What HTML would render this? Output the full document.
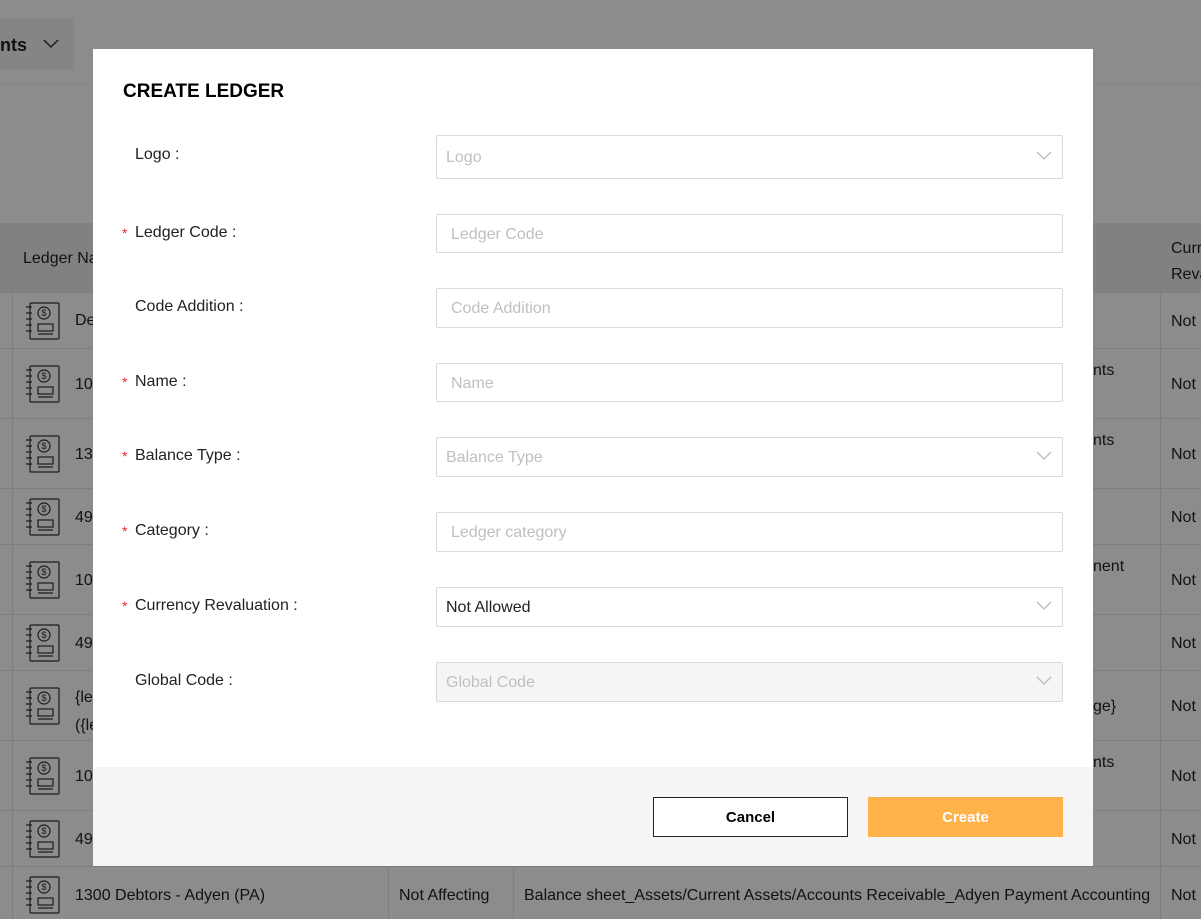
<!DOCTYPE html><html><head><style>
body{margin:0;width:1201px;height:919px;overflow:hidden;font-family:"Liberation Sans",sans-serif;background:#fff;position:relative}
.bg{position:absolute;inset:0;background:#fff}
.ov{position:absolute;inset:0;background:rgba(0,0,0,.45)}
.t{position:absolute;font-size:16px;color:#222}
.row{position:absolute;left:0;width:1201px;border-bottom:1px solid #e6e6e6}
.vl{position:absolute;top:223px;bottom:0;width:1px;background:#e6e6e6}
.modal{position:absolute;left:93px;top:49px;width:1000px;height:817px;background:#fff}
.lab{position:absolute;left:42px;font-size:16px;color:#222;margin-top:1px}
.req{position:absolute;left:29px;color:#f5222d;font-size:14px}
.inp{position:absolute;left:343px;width:627px;height:38px;border:1px solid #d9d9d9;border-radius:2px;box-sizing:border-box;font-size:16px;color:#bfbfbf;padding:0 14px;line-height:40px}
.sel{padding-left:9px}
.chev{position:absolute;right:10px;top:13px}
</style></head><body>
<div class="bg">
<div style="position:absolute;left:0;top:18px;width:74px;height:52px;background:#f2f2f2"></div>
<div class="t" style="left:0;top:35px;font-weight:bold;font-size:18px">nts</div>
<svg style="position:absolute;left:42px;top:38px" width="18" height="12"><path d="M2 2l7 7 7-7" stroke="#333" stroke-width="1.5" fill="none"/></svg>
<div style="position:absolute;left:0;top:84px;width:1201px;height:1px;background:#eee"></div>
<div style="position:absolute;left:0;top:223px;width:1201px;height:70px;background:#ececec"></div>
<div class="t" style="left:23px;top:250px">Ledger Na</div>
<div class="t" style="left:1171px;top:236px;line-height:26px">Curr<br>Reva</div>
<div class="vl" style="left:12px"></div><div class="vl" style="left:388px;top:867px"></div><div class="vl" style="left:513px;top:867px"></div><div class="vl" style="left:1160px"></div>
<div class="row" style="top:292px;height:56px"></div><div class="row" style="top:348px;height:70px"></div><div class="row" style="top:418px;height:70px"></div><div class="row" style="top:488px;height:56px"></div><div class="row" style="top:544px;height:70px"></div><div class="row" style="top:614px;height:56px"></div><div class="row" style="top:670px;height:70px"></div><div class="row" style="top:740px;height:70px"></div><div class="row" style="top:810px;height:56px"></div>
<div class="t" style="left:75px;top:312px">De</div><div class="t" style="left:75px;top:376px">10</div><div class="t" style="left:75px;top:446px">13</div><div class="t" style="left:75px;top:509px">49</div><div class="t" style="left:75px;top:572px">10</div><div class="t" style="left:75px;top:635px">49</div><div class="t" style="left:75px;top:684px;line-height:28px">{le<br>({le</div><div class="t" style="left:75px;top:768px">10</div><div class="t" style="left:75px;top:831px">49</div>
<div class="t" style="left:75px;top:887px">1300 Debtors - Adyen (PA)</div>
<div class="t" style="left:399px;top:887px">Not Affecting</div>
<div class="t" style="left:524px;top:887px">Balance sheet_Assets/Current Assets/Accounts Receivable_Adyen Payment Accounting</div>
<div class="t" style="left:1093px;top:362px">nts</div><div class="t" style="left:1093px;top:432px">nts</div><div class="t" style="left:1093px;top:558px">nent</div><div class="t" style="left:1093px;top:698px">ge}</div><div class="t" style="left:1093px;top:754px">nts</div>
<div class="t" style="left:1171px;top:313px">Not</div><div class="t" style="left:1171px;top:376px">Not</div><div class="t" style="left:1171px;top:446px">Not</div><div class="t" style="left:1171px;top:509px">Not</div><div class="t" style="left:1171px;top:572px">Not</div><div class="t" style="left:1171px;top:635px">Not</div><div class="t" style="left:1171px;top:698px">Not</div><div class="t" style="left:1171px;top:768px">Not</div><div class="t" style="left:1171px;top:831px">Not</div><div class="t" style="left:1171px;top:887px">Not</div>
<svg width="40" height="919" style="position:absolute;left:26px;top:0">
<defs><g id="ic" fill="none" stroke="#333" stroke-width="1.2"><rect x="4" y="1" width="29" height="36" rx="1"/><circle cx="18" cy="11" r="6"/><rect x="12" y="22" width="15" height="7"/><path d="M12 32h15M0 5h6M0 11h6M0 17h6M0 23h6M0 29h6"/><text x="15.5" y="14" font-size="9" fill="#333" stroke="none" font-family="Liberation Sans">$</text></g></defs>
<use href="#ic" y="302"/><use href="#ic" y="365"/><use href="#ic" y="435"/><use href="#ic" y="498"/><use href="#ic" y="561"/><use href="#ic" y="624"/><use href="#ic" y="687"/><use href="#ic" y="757"/><use href="#ic" y="820"/><use href="#ic" y="876"/>
</svg>
</div>
<div class="ov"></div>
<div class="modal">
<div style="position:absolute;left:30px;top:32px;font-size:19px;font-weight:bold;color:#000">CREATE LEDGER</div>
<div class="lab" style="top:96px">Logo :</div>
<div class="inp sel" style="top:86px;height:44px;line-height:44px">Logo<svg class="chev" style="top:15px" width="16" height="10"><path d="M1 1l7 7 7-7" stroke="#bbb" stroke-width="1.3" fill="none"/></svg></div>
<span class="req" style="top:176px">*</span><div class="lab" style="top:174px">Ledger Code :</div>
<div class="inp" style="top:165px;height:39px">Ledger Code</div>
<div class="lab" style="top:248px">Code Addition :</div>
<div class="inp" style="top:239px;height:40px">Code Addition</div>
<span class="req" style="top:325px">*</span><div class="lab" style="top:323px">Name :</div>
<div class="inp" style="top:314px;height:39px">Name</div>
<span class="req" style="top:399px">*</span><div class="lab" style="top:397px">Balance Type :</div>
<div class="inp sel" style="top:388px;height:40px">Balance Type<svg class="chev" width="16" height="10"><path d="M1 1l7 7 7-7" stroke="#bbb" stroke-width="1.3" fill="none"/></svg></div>
<span class="req" style="top:474px">*</span><div class="lab" style="top:472px">Category :</div>
<div class="inp" style="top:463px;height:40px">Ledger category</div>
<span class="req" style="top:549px">*</span><div class="lab" style="top:547px">Currency Revaluation :</div>
<div class="inp sel" style="top:538px;height:40px;color:#222">Not Allowed<svg class="chev" width="16" height="10"><path d="M1 1l7 7 7-7" stroke="#bbb" stroke-width="1.3" fill="none"/></svg></div>
<div class="lab" style="top:622px">Global Code :</div>
<div class="inp sel" style="top:613px;height:40px;background:#f5f5f5">Global Code<svg class="chev" width="16" height="10"><path d="M1 1l7 7 7-7" stroke="#bbb" stroke-width="1.3" fill="none"/></svg></div>
<div style="position:absolute;left:0;top:718px;width:1000px;height:99px;background:#f5f5f5"></div>
<div style="position:absolute;left:560px;top:748px;width:195px;height:40px;border:1px solid #222;box-sizing:border-box;background:#fff;text-align:center;line-height:40px;font-weight:bold;font-size:15px">Cancel</div>
<div style="position:absolute;left:775px;top:748px;width:195px;height:40px;background:#ffb14a;text-align:center;line-height:41px;font-weight:bold;font-size:15px;color:#fff">Create</div>
</div>
</body></html>
